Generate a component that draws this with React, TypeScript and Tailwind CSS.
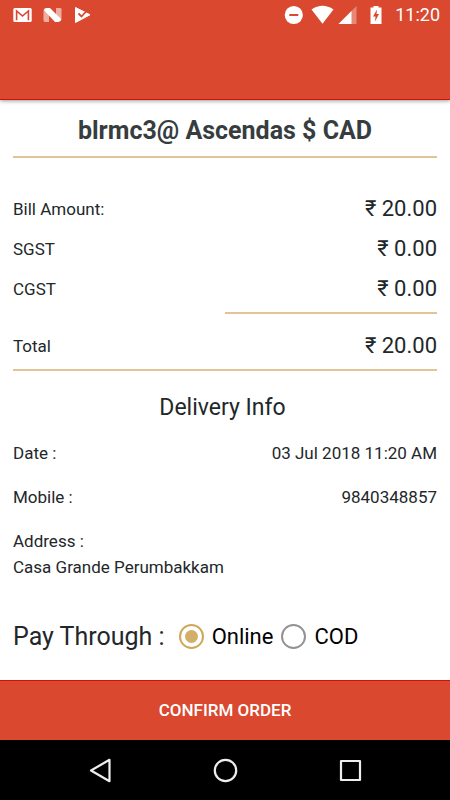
import { useState, type ReactNode } from "react";

function StatusBar() {
  return (
    <div className="flex h-[30px] items-center justify-between pr-[10px] pl-[13px] text-white">
      <div className="flex items-center gap-[11px]">
        <svg className="h-5 w-[19px]" viewBox="0 0 19 20" aria-label="Mail">
          <rect x="0.3" y="2.9" width="18.4" height="14" rx="1.5" fill="#fff" />
          <path d="M3.6 15.2V6L9.5 11L15.4 6V15.2" fill="none" stroke="#da482f" strokeWidth="1.6" />
        </svg>
        <svg className="h-5 w-[19px]" viewBox="0 0 19 20" aria-label="Android N">
          <path d="M0.5 5L6 8V16.9H2Q0.5 16.9 0.5 15Z" fill="#fff" opacity="0.55" />
          <path d="M13 2.9H17Q18.5 2.9 18.5 4.2V14.5L13 11Z" fill="#fff" opacity="0.55" />
          <path d="M0.8 5Q1.2 2.9 3.5 2.9H7L18.3 14.2Q17.8 16.9 15.5 16.9H12Z" fill="#fff" />
        </svg>
        <svg className="h-5 w-[19px]" viewBox="0 0 19 20" aria-label="Play Protect">
          <path d="M2.5 2.5L17 9.8L2.5 17.5Z" fill="#fff" stroke="#fff" strokeWidth="1" strokeLinejoin="round" />
          <path d="M5.5 8.5L8.5 11.5L14.5 5" fill="none" stroke="#da482f" strokeWidth="1.8" />
        </svg>
      </div>
      <div className="flex items-center">
        <svg className="mr-2 h-5 w-[19px]" viewBox="0 0 19 20" aria-label="Do not disturb">
          <circle cx="9.8" cy="10" r="9.1" fill="#fff" />
          <path d="M5.3 10H14.3" stroke="#da482f" strokeWidth="2" />
        </svg>
        <svg className="mr-1 h-5 w-[23px]" viewBox="0 0 23 20" aria-label="Wi-Fi">
          <path d="M0.5 4.5Q11.5-3 22.5 4.5L11.5 18.7Z" fill="#fff" />
        </svg>
        <svg className="mr-[13px] h-5 w-[19px]" viewBox="0 0 19 20" aria-label="Signal">
          <path d="M0.5 19L18.5 1V19Z" fill="#fff" opacity="0.35" />
          <path d="M0.5 19L13.5 6V19Z" fill="#fff" />
        </svg>
        <svg className="mr-[13px] h-5 w-3" viewBox="0 0 12 20" aria-label="Battery charging">
          <path d="M0.5 2.5H3.5V1H8.5V2.5H11.5V19H0.5Z" fill="#fff" />
          <path d="M7 4.5L3 11.5H5.5L5 16.5L9 9H6.5Z" fill="#da482f" />
        </svg>
        <span className="text-[18px] leading-[30px]">11:20</span>
      </div>
    </div>
  );
}

function AmountRow({ label, value }: { label: string; value: string }) {
  return (
    <div className="flex h-10 items-center justify-between">
      <dt>{label}</dt>
      <dd className="pb-[3px] text-[22px]">{value}</dd>
    </div>
  );
}

function InfoRow({ label, value }: { label: string; value: string }) {
  return (
    <div className="flex h-11 items-center justify-between">
      <dt>{label}</dt>
      <dd>{value}</dd>
    </div>
  );
}

function PayOption({ label, checked, onSelect }: { label: string; checked: boolean; onSelect: () => void }) {
  return (
    <label className="flex items-center gap-2 text-[22px] text-black">
      <input
        type="radio"
        name="payment"
        checked={checked}
        onChange={onSelect}
        className="size-[25px] appearance-none rounded-full border-2 border-[#929292] bg-white bg-clip-content p-1 checked:border-[#d1a757] checked:bg-[#d3ae69]"
      />
      {label}
    </label>
  );
}

function NavButton({ label, children }: { label: string; children: ReactNode }) {
  return (
    <button type="button" aria-label={label} className="flex h-[60px] w-[25px] items-center justify-center">
      <svg className="size-[25px]" viewBox="0 0 25 25" fill="none" stroke="#eee" strokeWidth="2.2" strokeLinejoin="round">
        {children}
      </svg>
    </button>
  );
}

export default function App() {
  const [method, setMethod] = useState("online");

  return (
    <div className="flex min-h-screen flex-col bg-white font-[Roboto,sans-serif] text-[17px] text-[#22272a]">
      <header className="relative h-[100px] border-b border-[#d10f0b] bg-[#da482f] shadow-[0_1px_4px_rgba(0,0,0,0.4)]">
        <StatusBar />
      </header>

      <main className="flex-1 px-[13px] pb-5">
        <h1 className="border-b-2 border-[#e0c697] pt-[15px] pb-[9px] text-center text-[25px] leading-8 font-bold text-[#373d3f]">
          blrmc3@ Ascendas $ CAD
        </h1>

        <dl className="mt-8">
          <AmountRow label="Bill Amount:" value="₹ 20.00" />
          <AmountRow label="SGST" value="₹ 0.00" />
          <AmountRow label="CGST" value="₹ 0.00" />
          <div className="mt-[2px] ml-auto w-1/2 border-t-2 border-[#e0c697]" />
          <div className="mt-[13px] border-b-2 border-[#e0c697] pb-[2px]">
            <AmountRow label="Total" value="₹ 20.00" />
          </div>
        </dl>

        <h2 className="mt-[21px] pr-[5px] text-center text-[23px] leading-8">Delivery Info</h2>
        <dl className="mt-2">
          <InfoRow label="Date :" value="03 Jul 2018 11:20 AM" />
          <InfoRow label="Mobile :" value="9840348857" />
          <div className="mt-2 leading-[26px]">
            <dt>Address :</dt>
            <dd>Casa Grande Perumbakkam</dd>
          </div>
        </dl>

        <fieldset className="mt-9 flex h-10 items-center">
          <legend className="float-left mr-[14px] pt-px text-[25px] leading-10">Pay Through :</legend>
          <div className="flex gap-2">
            <PayOption label="Online" checked={method === "online"} onSelect={() => setMethod("online")} />
            <PayOption label="COD" checked={method === "cod"} onSelect={() => setMethod("cod")} />
          </div>
        </fieldset>
      </main>

      <button type="button" className="h-[60px] border-t border-[#d10f0b] bg-[#da482f] font-medium text-white">
        CONFIRM ORDER
      </button>

      <nav className="flex h-[60px] items-center justify-center gap-[100px] bg-black">
        <NavButton label="Back">
          <path d="M21.5 1.8V23.2L3 12.5Z" />
        </NavButton>
        <NavButton label="Home">
          <circle cx="12.5" cy="12.5" r="10.7" />
        </NavButton>
        <NavButton label="Recent apps">
          <rect x="3" y="3" width="19" height="19" />
        </NavButton>
      </nav>
    </div>
  );
}
